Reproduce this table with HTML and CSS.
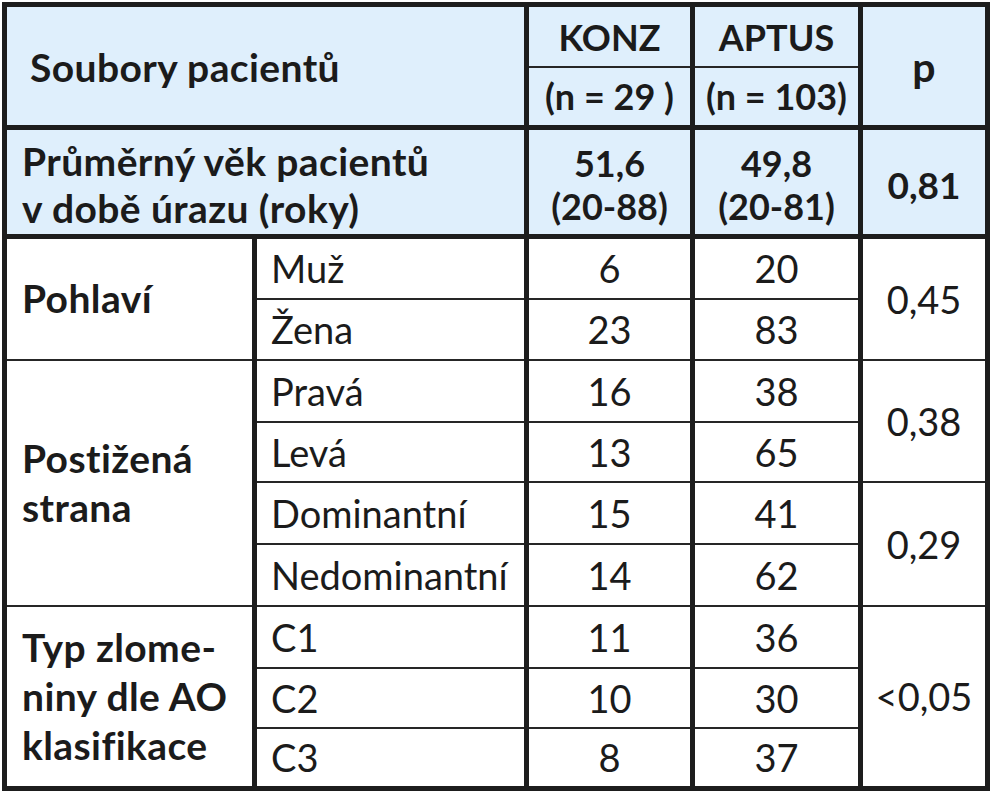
FILE: index.html
```html
<!DOCTYPE html>
<html lang="cs">
<head>
<meta charset="utf-8">
<title>Soubory pacientů</title>
<link rel="stylesheet" href="styles.css">
</head>
<body>
<table class="stats">
  <colgroup>
    <col class="c-lab">
    <col class="c-sub">
    <col class="c-konz">
    <col class="c-aptus">
    <col class="c-p">
  </colgroup>
  <thead>
    <tr class="r-h1">
      <th class="title" colspan="2" rowspan="2">Soubory pacientů</th>
      <th class="hval">KONZ</th>
      <th class="hval">APTUS</th>
      <th class="p-head" rowspan="2">p</th>
    </tr>
    <tr class="r-h2">
      <th class="hval">(n = 29 )</th>
      <th class="hval">(n = 103)</th>
    </tr>
  </thead>
  <tbody class="age">
    <tr class="r-age">
      <th class="age-label" colspan="2">Průměrný věk pacientů<br>v době úrazu (roky)</th>
      <td class="age-val">51,6<br>(20-88)</td>
      <td class="age-val">49,8<br>(20-81)</td>
      <td class="age-p">0,81</td>
    </tr>
  </tbody>
  <tbody class="group">
    <tr class="r-a">
      <th class="lab" rowspan="2">Pohlaví</th>
      <td class="sub">Muž</td><td class="num">6</td><td class="num">20</td>
      <td class="num" rowspan="2">0,45</td>
    </tr>
    <tr class="r-b">
      <td class="sub">Žena</td><td class="num">23</td><td class="num">83</td>
    </tr>
  </tbody>
  <tbody class="group">
    <tr class="r-a">
      <th class="lab" rowspan="4">Postižená<br>strana</th>
      <td class="sub">Pravá</td><td class="num">16</td><td class="num">38</td>
      <td class="num" rowspan="2">0,38</td>
    </tr>
    <tr class="r-c">
      <td class="sub">Levá</td><td class="num">13</td><td class="num">65</td>
    </tr>
    <tr class="r-a">
      <td class="sub">Dominantní</td><td class="num">15</td><td class="num">41</td>
      <td class="num" rowspan="2">0,29</td>
    </tr>
    <tr class="r-a">
      <td class="sub">Nedominantní</td><td class="num">14</td><td class="num">62</td>
    </tr>
  </tbody>
  <tbody class="group">
    <tr class="r-a">
      <th class="lab" rowspan="3">Typ zlome-<br>niny dle AO<br>klasifikace</th>
      <td class="sub">C1</td><td class="num">11</td><td class="num">36</td>
      <td class="num" rowspan="3">&lt;0,05</td>
    </tr>
    <tr class="r-c">
      <td class="sub">C2</td><td class="num">10</td><td class="num">30</td>
    </tr>
    <tr class="r-b">
      <td class="sub">C3</td><td class="num">8</td><td class="num">37</td>
    </tr>
  </tbody>
</table>
</body>
</html>
```

FILE: styles.css
```css
html, body {
  margin: 0;
  background: #ffffff;
}

body {
  padding: 2px;
  font-family: Lato, "Open Sans", "DejaVu Sans", sans-serif;
  color: #1b1b1b;
}

.stats {
  border-collapse: collapse;
  table-layout: fixed;
  width: 988px;
  border: 5px solid #1d1d1d;
}

.c-lab { width: 250px; }
.c-sub { width: 272px; }
.c-konz { width: 166px; }
.c-aptus { width: 168px; }
.c-p { width: 127px; }

.stats th,
.stats td {
  border: 2px solid #262626;
  border-left-width: 5px;
  border-right-width: 5px;
  border-left-color: #1d1d1d;
  border-right-color: #1d1d1d;
  padding: 0;
  font-size: 38px;
  line-height: 44px;
  text-align: center;
  vertical-align: middle;
}

.stats th,
.stats .age-val,
.stats .age-p {
  font-weight: 700;
  font-size: 39px;
  letter-spacing: 0.4px;
}

.stats .hval,
.stats .age-val {
  font-size: 36px;
  letter-spacing: 0;
}

.stats .age-p {
  font-size: 37px;
  letter-spacing: 0;
}

.stats thead th,
.stats .r-age > * {
  background: #dfeffc;
}

.stats .r-h2 > *,
.stats .r-h1 > .title,
.stats .r-h1 > .p-head {
  border-bottom: 5px solid #1d1d1d;
}

.r-h1 { height: 62px; }
.r-h2 { height: 61px; }
.r-age { height: 109px; }
.r-a { height: 62px; }
.r-b { height: 61px; }
.r-c { height: 60px; }

.stats .r-h1 > th {
  padding-top: 2px;
}

.stats .title {
  text-align: left;
  padding: 4px 0 0 23px;
}

.stats .p-head {
  font-size: 41px;
}

.stats .r-age > * {
  border-top: 5px solid #1d1d1d;
  border-bottom: 5px solid #1d1d1d;
  padding-top: 6px;
}

.stats .age-label {
  text-align: left;
  padding-left: 15px;
  line-height: 47px;
}

.stats .age-val {
  line-height: 43px;
}

.stats .lab {
  text-align: left;
  padding-left: 15px;
  line-height: 49px;
}

.stats .sub {
  text-align: left;
  padding-left: 14px;
  font-weight: 400;
}

.stats .num {
  font-weight: 400;
}
```
